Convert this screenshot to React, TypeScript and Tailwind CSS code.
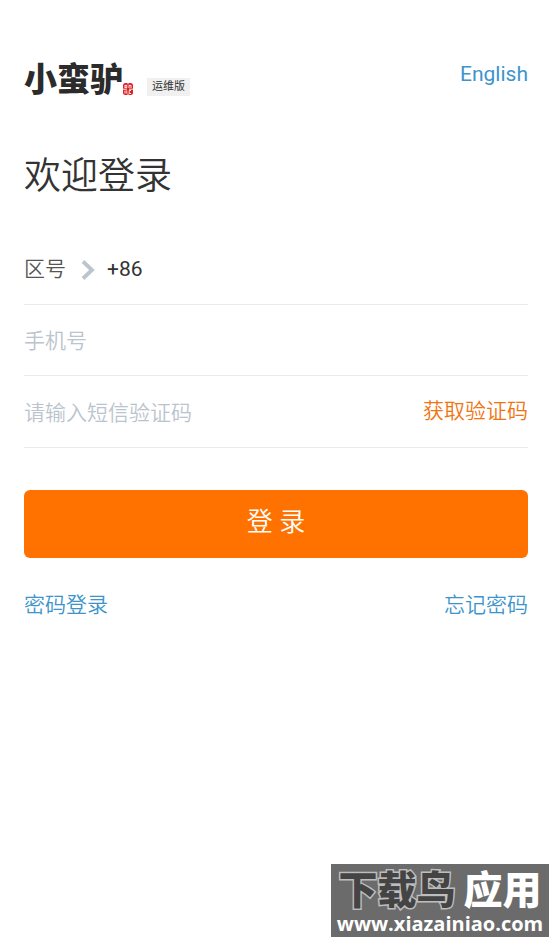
import { useState } from 'react'

function Seal() {
  return (
    <svg className="h-3 w-[10px]" viewBox="0 0 10 12" aria-hidden="true">
      <rect width="10" height="12" rx="2.5" fill="#e02020" />
      <path
        d="M2 2v3M2 2.400h1.800v2.200H2M6 5V2.400h2V5M2 7.500v3M3.800 7.500v3M8 7.500H6.200v3H8M0 6.200h4M6 6.200h4M5 0v1.500M5 10.500V12"
        fill="none"
        stroke="#fff"
        strokeWidth="0.9"
      />
    </svg>
  )
}

function Chevron() {
  return (
    <svg className="h-5 w-[14px]" viewBox="0 0 14 20" aria-hidden="true">
      <path d="M2 1.500l9 8.500-9 8.500" fill="none" stroke="#bcc5ce" strokeWidth="3.800" />
    </svg>
  )
}

function Watermark() {
  return (
    <div className="absolute right-[3px] bottom-[3px] flex h-[73px] w-[218px] flex-col items-center bg-[#6b6b6b] pt-2 text-white">
      <div className="flex gap-2 text-[39px] leading-[38px] font-black">
        <span className="text-[#444] [-webkit-text-stroke:3px_#bdbdbd] [paint-order:stroke_fill]">下载鸟</span>
        <span>应用</span>
      </div>
      <span className="font-['Open_Sans','Noto_Sans',sans-serif] text-[20px] leading-7 font-bold">
        www.xiazainiao.com
      </span>
    </div>
  )
}

export default function App() {
  const [phone, setPhone] = useState('')
  const [code, setCode] = useState('')

  return (
    <div className="relative min-h-screen overflow-hidden bg-white px-6 pt-14 font-[Roboto,'Noto_Sans_CJK_SC',sans-serif] text-[21px] text-[#333]">
      {/* Header */}
      <header className="flex h-11 items-start justify-between">
        <div className="flex items-end">
          <h1 className="pt-1 text-[33px] leading-10 font-black text-[#2b2b2b]">小蛮驴</h1>
          <div className="mb-[5px]">
            <Seal />
          </div>
          <span className="mb-1 ml-[14px] bg-[#f0f0f0] px-[5px] text-[11px] leading-[18px]">运维版</span>
        </div>
        <a href="#en" className="leading-9 text-[#3d94cc]">
          English
        </a>
      </header>

      <main>
        <h2 className="mt-[51px] text-[37px] leading-[52px] font-[350]">欢迎登录</h2>

        <form className="mt-[29px]" onSubmit={(e) => e.preventDefault()}>
          <div className="flex h-[73px] items-center border-b border-[#e6ebee] pt-1">
            <span className="font-[350] text-[#555]">区号</span>
            <button type="button" aria-label="选择区号" className="ml-[15px] flex items-center gap-3">
              <Chevron />
              <span className="text-[#333]">+86</span>
            </button>
          </div>

          <div className="flex h-[71px] items-center border-b border-[#e6ebee] pt-1">
            <input
              type="tel"
              aria-label="手机号"
              placeholder="手机号"
              value={phone}
              onChange={(e) => setPhone(e.target.value)}
              className="w-full font-[350] outline-none placeholder:text-[#bbc4cd]"
            />
          </div>

          <div className="flex h-[72px] items-center border-b border-[#e6ebee] pt-1">
            <input
              type="text"
              aria-label="短信验证码"
              placeholder="请输入短信验证码"
              value={code}
              onChange={(e) => setCode(e.target.value)}
              className="min-w-0 flex-1 font-[350] outline-none placeholder:text-[#bbc4cd]"
            />
            <button type="button" className="pb-1 font-[350] text-[#f07510]">
              获取验证码
            </button>
          </div>

          <button
            type="submit"
            className="mt-[42px] h-[68px] w-full rounded-md bg-[#ff7200] pb-1 text-[26px] font-[350] text-white"
          >
            登 录
          </button>
        </form>

        <div className="mt-[31px] flex justify-between leading-8 font-[350] text-[#3d94cc]">
          <a href="#password">密码登录</a>
          <a href="#forgot">忘记密码</a>
        </div>
      </main>

      <Watermark />
    </div>
  )
}
